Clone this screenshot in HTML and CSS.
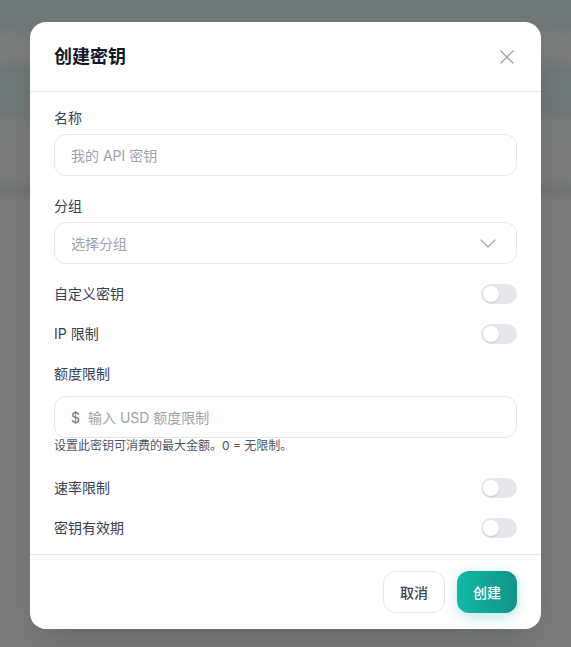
FILE: index.html
```html
<!DOCTYPE html>
<html lang="zh-CN">
<head>
    <meta charset="UTF-8">
    <meta name="viewport" content="width=device-width, initial-scale=1.0">
    <title>创建密钥</title>
    <link rel="stylesheet" href="styles.css">
</head>
<body>
    <div class="overlay">
        <div class="modal">
            <!-- 头部 -->
            <div class="modal-header">
                <h2 class="title">创建密钥</h2>
                <button class="close" type="button" aria-label="关闭">
                    <svg width="14" height="14" viewBox="0 0 14 14" fill="none" stroke="currentColor" stroke-width="1.3" stroke-linecap="round">
                        <path d="M1 1L13 13M13 1L1 13"/>
                    </svg>
                </button>
            </div>

            <!-- 表单 -->
            <div class="modal-body">
                <div class="field">
                    <label class="label">名称</label>
                    <div class="input"><span class="placeholder">我的 API 密钥</span></div>
                </div>

                <div class="field">
                    <label class="label">分组</label>
                    <div class="input select">
                        <span class="placeholder">选择分组</span>
                        <svg class="chevron" width="16" height="9" viewBox="0 0 16 9" fill="none" stroke="currentColor" stroke-width="1.2" stroke-linecap="round" stroke-linejoin="round">
                            <path d="M1 1L8 8L15 1"/>
                        </svg>
                    </div>
                </div>

                <div class="switch-row">
                    <span class="label">自定义密钥</span>
                    <span class="switch"><span class="knob"></span></span>
                </div>

                <div class="switch-row">
                    <span class="label">IP 限制</span>
                    <span class="switch"><span class="knob"></span></span>
                </div>

                <div class="field quota">
                    <label class="label">额度限制</label>
                    <div class="input">
                        <span class="prefix">$</span>
                        <span class="placeholder">输入 USD 额度限制</span>
                    </div>
                    <p class="help">设置此密钥可消费的最大金额。0 = 无限制。</p>
                </div>

                <div class="switch-row">
                    <span class="label">速率限制</span>
                    <span class="switch"><span class="knob"></span></span>
                </div>

                <div class="switch-row">
                    <span class="label">密钥有效期</span>
                    <span class="switch"><span class="knob"></span></span>
                </div>
            </div>

            <!-- 底部按钮 -->
            <div class="modal-footer">
                <button class="btn btn-cancel" type="button">取消</button>
                <button class="btn btn-primary" type="button">创建</button>
            </div>
        </div>
    </div>
</body>
</html>
```

FILE: styles.css
```css
html, body{
    width: 100%;
    height: 100%;
    margin: 0;
    padding: 0;
}
body{
    font-family: Inter, "Noto Sans CJK SC", sans-serif;
    color: #374151;
    /* 模糊的背景页面 */
    background: linear-gradient(to bottom,
        #6e7978 0, #6e7978 26px,
        #7a7b7b 36px, #7b7b7b 58px,
        #6f7978 70px, #6f7978 110px,
        #7a7b7b 124px, #7b7b7b 180px,
        #717373 190px, #7b7b7b 200px,
        #7b7b7b 100%);
}
.overlay{
    display: flex;
    justify-content: center;
    align-items: flex-start;
    height: 100%;
    padding-top: 22px;
    box-sizing: border-box;
}

/* 弹窗 */
.modal{
    width: 511px;
    background: #fff;
    border-radius: 16px;
    box-shadow: 0 20px 40px -10px rgba(0, 0, 0, .18);
    overflow: hidden;
}
.modal-header{
    display: flex;
    justify-content: space-between;
    align-items: center;
    padding: 21px 24px 20px;
    border-bottom: 1px solid #e5e7eb;
}
.title{
    margin: 0;
    font-size: 18px;
    line-height: 28px;
    font-weight: 700;
    color: #111827;
}
.close{
    display: flex;
    padding: 0;
    margin-right: 3px;
    border: 0;
    background: none;
    color: #9ca3af;
}

.modal-body{
    padding: 16px 24px;
    display: flex;
    flex-direction: column;
    gap: 20px;
}
.label{
    display: block;
    font-size: 14px;
    line-height: 20px;
    color: #374151;
}
.field .label{
    margin-bottom: 6px;
}
.field.quota .label{
    margin-bottom: 12px;
}
.input{
    display: flex;
    align-items: center;
    height: 42px;
    padding: 0 16px;
    box-sizing: border-box;
    border: 1px solid #e5e7eb;
    border-radius: 12px;
    font-size: 14px;
}
.placeholder{
    color: #9ca3af;
}
.select{
    justify-content: space-between;
}
.chevron{
    color: #9ca3af;
    margin-right: 4px;
}
.prefix{
    color: #6b7280;
    margin-right: 8px;
}
.help{
    margin: 0 0 4px;
    font-size: 12px;
    line-height: 16px;
    color: #4b5563;
}

/* 开关 */
.switch-row{
    display: flex;
    justify-content: space-between;
    align-items: center;
    height: 20px;
}
.switch{
    position: relative;
    width: 36px;
    height: 20px;
    border-radius: 10px;
    background: #e5e7eb;
}
.knob{
    position: absolute;
    top: 2px;
    left: 2px;
    width: 16px;
    height: 16px;
    border-radius: 50%;
    background: #fff;
    box-shadow: 0 1px 2px rgba(0, 0, 0, .15);
}

.modal-footer{
    display: flex;
    justify-content: flex-end;
    gap: 12px;
    padding: 16px 24px;
    border-top: 1px solid #e5e7eb;
}
.btn{
    height: 42px;
    padding: 0 16px;
    border-radius: 12px;
    font-family: inherit;
    font-size: 14px;
    font-weight: 500;
    cursor: pointer;
}
.btn-cancel{
    background: #fff;
    border: 1px solid #e5e7eb;
    color: #374151;
}
.btn-primary{
    border: 0;
    color: #fff;
    background: linear-gradient(to right, #14b8a6, #0f9488);
    box-shadow: 0 4px 14px rgba(20, 184, 166, .3);
}
```
